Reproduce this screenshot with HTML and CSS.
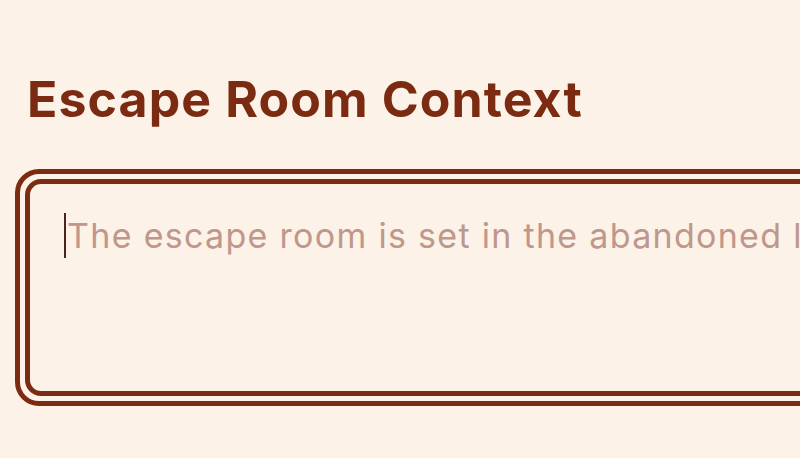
FILE: index.html
```html
<!DOCTYPE html>
<html lang="en">
<head>
<meta charset="utf-8">
<title>Escape Room Context</title>
<link rel="stylesheet" href="styles.css">
</head>
<body>
<main class="page">
  <h1 class="title">Escape Room Context</h1>
  <div class="field-outer">
    <div class="field-inner">
      <span class="caret"></span><span class="placeholder">The escape room is set in the abandoned lighthouse on the edge of town</span>
    </div>
  </div>
</main>
</body>
</html>
```
FILE: styles.css
```css
html, body {
  margin: 0;
  padding: 0;
  background: #fcf2e8;
  overflow: hidden;
  width: 800px;
  height: 458px;
}
.page {
  font-family: Inter, "Noto Sans", sans-serif;
  padding: 69px 0 0 15px;
  display: flex;
  flex-direction: column;
}
.title {
  margin: 0 0 40px 12px;
  font-size: 50px;
  font-weight: 700;
  line-height: 60px;
  color: #7a2b11;
  letter-spacing: 1.1px;
}
.field-outer {
  width: 960px;
  height: 237px;
  border: 5px solid #7a2b11;
  border-radius: 24px;
  padding: 5px;
  box-sizing: border-box;
}
.field-inner {
  height: 100%;
  box-sizing: border-box;
  border: 5px solid #7a2b11;
  border-radius: 16px;
  padding: 29px 0 0 34px;
  white-space: nowrap;
  overflow: hidden;
  display: flex;
  align-items: flex-start;
}
.caret {
  width: 2px;
  height: 45px;
  background: #4a2418;
  flex: none;
}
.placeholder {
  font-size: 34px;
  line-height: 45px;
  color: #bf978b;
  margin-left: 1px;
  letter-spacing: 1.3px;
}
```
